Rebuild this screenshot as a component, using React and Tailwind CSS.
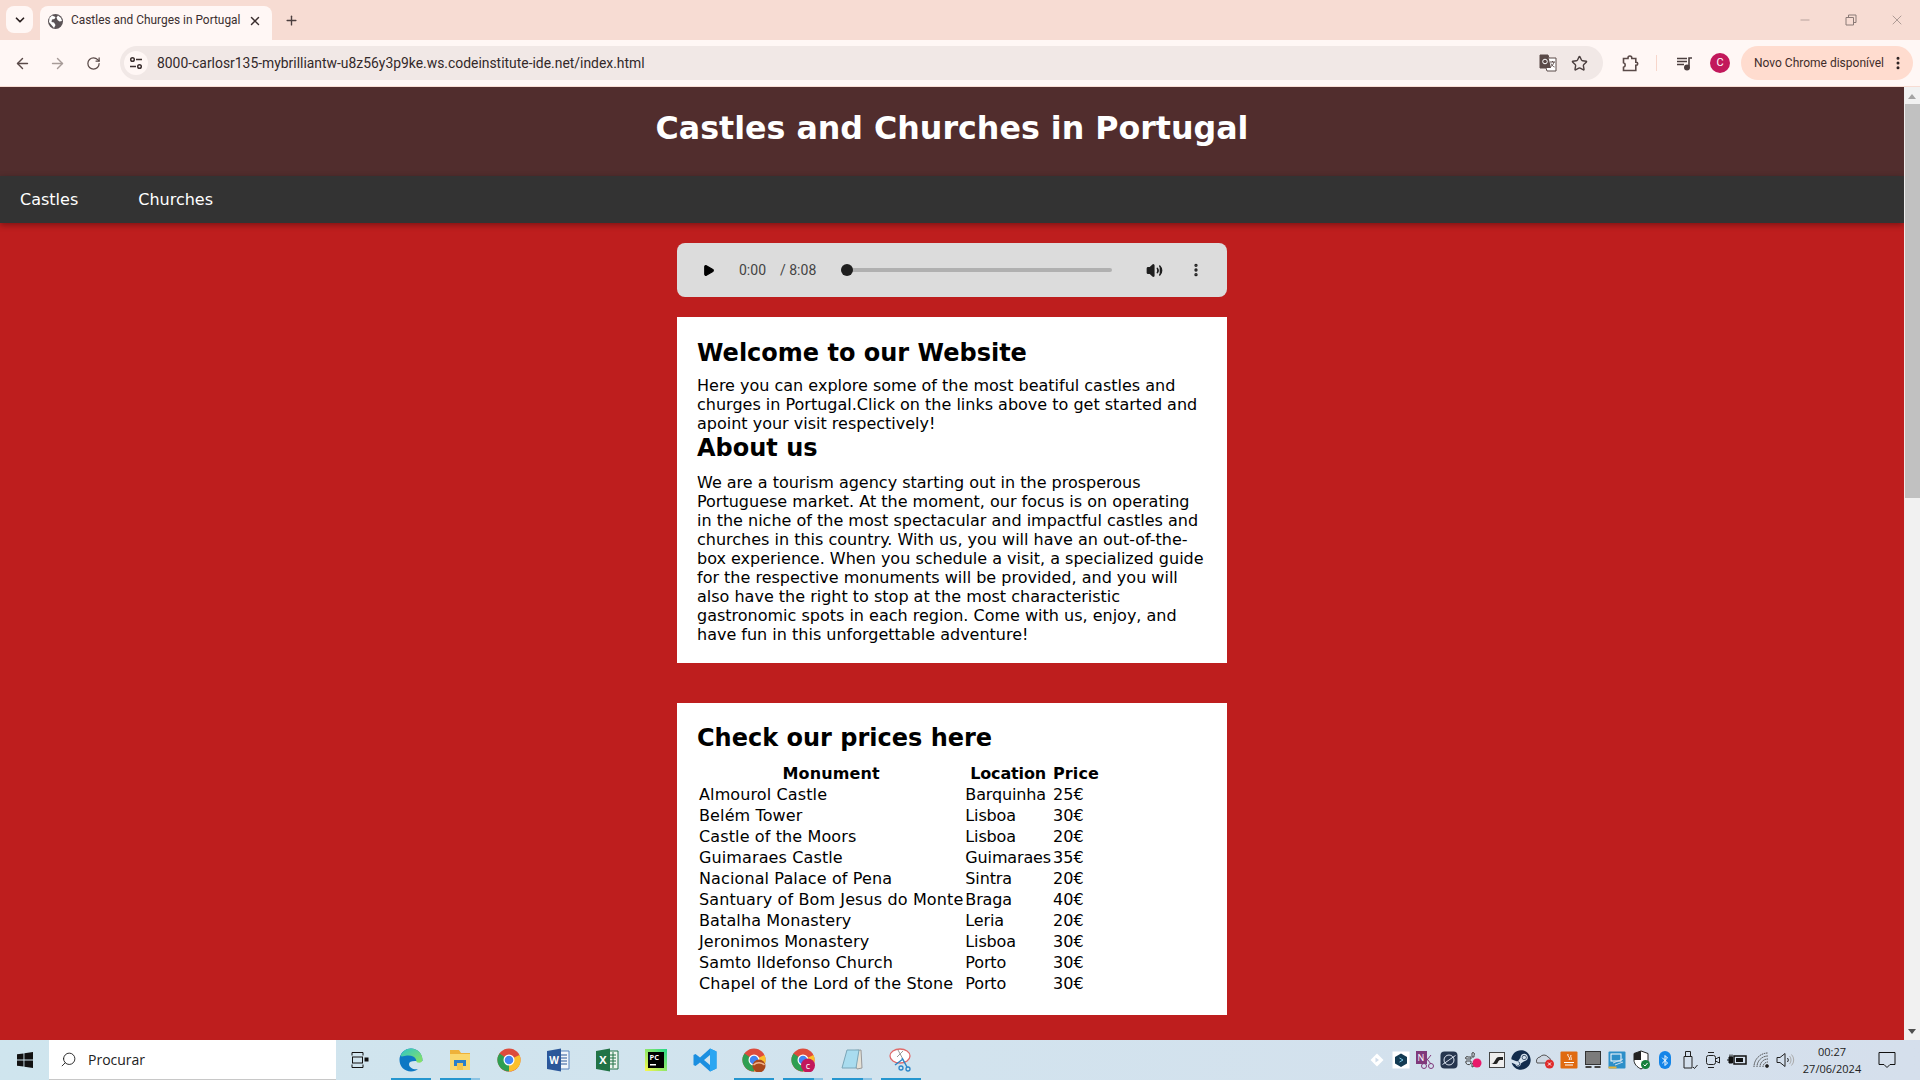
import React from "react";
import { ChevronDown, X, Plus, ArrowLeft, ArrowRight, RotateCw, Star, EllipsisVertical, Minus, Search, Play, Volume2, Bluetooth } from "lucide-react";
import { FaSteam } from "react-icons/fa";

const rows = [
  ["Almourol Castle", "Barquinha", "25€"],
  ["Belém Tower", "Lisboa", "30€"],
  ["Castle of the Moors", "Lisboa", "20€"],
  ["Guimaraes Castle", "Guimaraes", "35€"],
  ["Nacional Palace of Pena", "Sintra", "20€"],
  ["Santuary of Bom Jesus do Monte", "Braga", "40€"],
  ["Batalha Monastery", "Leria", "20€"],
  ["Jeronimos Monastery", "Lisboa", "30€"],
  ["Samto Ildefonso Church", "Porto", "30€"],
  ["Chapel of the Lord of the Stone", "Porto", "30€"],
];

function ChromeBar() {
  return (
    <div className="shrink-0 font-['Roboto',sans-serif]">
      <div className="h-10 bg-[#f7dcd3] flex items-end pl-[6px]">
        <div className="w-[27px] h-[27px] mb-[7px] rounded-lg bg-[#fff7f5] flex items-center justify-center">
          <ChevronDown size={14} strokeWidth={3} color="#2b2020" />
        </div>
        <div className="ml-[7px] w-[232px] h-[34px] bg-[#fff7f5] rounded-t-lg flex items-center pl-[8px] pr-[10px] pb-[4px] text-[11.9px] text-[#3b2f2f]">
          <svg width="15" height="15" viewBox="0 0 15 15">
            <circle cx="7.500" cy="7.500" r="7.500" fill="#5b5356" />
            <path d="M4 1.500 7.500 3 6.500 5 4 5.500 3.500 8 6 8.500 7.500 11 6 14 3.500 11 1 8 1.500 4zM10 1.500 13 4 14 7 11.500 7.500 9.500 6 8.500 3.500z" fill="#fff" />
          </svg>
          <span className="ml-[8px] flex-1 whitespace-nowrap">Castles and Churges in Portugal</span>
          <X size={14} strokeWidth={2.5} color="#3b2f2f" />
        </div>
        <div className="ml-[12px] mb-[12px]">
          <Plus size={15} strokeWidth={2.2} color="#4b3f3f" />
        </div>
        <div className="ml-auto self-center flex items-center pr-[15px] gap-[33px] text-[#8a7a76]">
          <Minus size={14} strokeWidth={1} />
          <svg width="12" height="12" viewBox="0 0 12 12" fill="none" stroke="currentColor"><path d="M1 3.500h7.500V11H1zM3.500 3.500V1H11v7.500H8.500" /></svg>
          <X size={16} strokeWidth={1} className="-ml-px" />
        </div>
      </div>
      <div className="h-[47px] bg-[#fff7f5] border-b border-[#f7dcd3] flex items-center pl-[14px] pr-[6px]">
        <ArrowLeft size={17} strokeWidth={2} color="#5a4a48" />
        <ArrowRight size={17} strokeWidth={2} color="#a79b98" className="ml-[18px]" />
        <RotateCw size={15} strokeWidth={2} color="#5a4a48" className="ml-[20px]" />
        <div className="ml-[19px] w-[1483px] h-[34px] rounded-full bg-[#f1e8e6] flex items-center pl-[4px] pr-[15px]">
          <div className="w-[24px] h-[24px] rounded-full bg-[#fff7f5] flex items-center justify-center">
            <svg width="14" height="14" viewBox="0 0 14 14" fill="none" stroke="#3b2f2f" strokeWidth="1.500"><circle cx="3.500" cy="3.500" r="1.800" /><path d="M7 3.500h6M1 10.500h6" /><circle cx="10.500" cy="10.500" r="1.800" /></svg>
          </div>
          <span className="ml-[9px] flex-1 text-[13.9px] text-[#33282a] whitespace-nowrap">8000-carlosr135-mybrilliantw-u8z56y3p9ke.ws.codeinstitute-ide.net/index.html</span>
          <svg width="18" height="18" viewBox="0 0 18 18">
            <path d="M1 1h8l1 3h7v13H8l-1-3H1z" fill="#fff" stroke="#5a4a48" />
            <path d="M1 1h8l3 13H1z" fill="#5a4a48" />
            <path d="M11 8h5M13.500 7v1M15 8c-.5 2-2 4-3.500 5M12 9.500c.6 1.400 2 3 3.500 3.500" stroke="#5a4a48" fill="none" />
            <circle cx="6" cy="7.500" r="2.300" fill="none" stroke="#fff" />
          </svg>
          <Star size={17} strokeWidth={2} color="#4b3f3f" className="ml-[14px]" />
        </div>
        <svg width="17" height="17" viewBox="0 0 17 17" fill="none" stroke="#5a4a48" strokeWidth="1.600" className="ml-[19px]"><path d="M1.500 3.500h4.500v-.6a1.900 1.900 0 0 1 3.800 0v.6h4v3.800h.4a1.500 1.500 0 0 1 0 3h-.4v5.200H1.500v-3.200a2.400 2.400 0 0 0 0-4.600z" /></svg>
        <div className="ml-[17px] w-px h-[16px] bg-[#f7d6cb]" />
        <svg width="17" height="17" viewBox="0 0 17 17" fill="none" stroke="#4b3f3f" strokeWidth="1.600" className="ml-[19px]"><path d="M1 3.500h10M1 6.500h10M1 9.500h7M13 11.500V3h3" /><circle cx="11" cy="12.500" r="2.200" fill="#4b3f3f" /></svg>
        <div className="ml-[17px] w-5 h-5 rounded-full bg-[#c2185b] text-white text-[11px] flex items-center justify-center">C</div>
        <div className="ml-[11px] w-[172px] h-[34px] rounded-full bg-[#ffdccf] flex items-center pl-[13px] pr-[7px] text-[12px] text-[#3f2c2a] whitespace-nowrap">
          <span className="flex-1">Novo Chrome disponível</span>
          <EllipsisVertical size={16} strokeWidth={2.5} color="#2b2020" />
        </div>
      </div>
    </div>
  );
}

function AudioBar() {
  return (
    <div className="w-[550px] h-[54px] rounded-lg bg-[#dcdcdc] flex items-center text-[14px] text-[#444] font-['Roboto',sans-serif] mx-auto">
      <Play size={13} fill="#000" color="#000" className="ml-[25px]" />
      <span className="ml-[24px]">0:00</span>
      <span className="ml-[14px]">/ 8:08</span>
      <div className="ml-[25px] relative w-[271px] h-[4px] rounded bg-[#b0b0b0]">
        <div className="absolute left-0 -top-[4px] w-3 h-3 rounded-full bg-[#1f1f1f]" />
      </div>
      <Volume2 size={17} fill="#1f1f1f" color="#1f1f1f" strokeWidth={2.200} className="ml-[34px]" />
      <EllipsisVertical size={16} strokeWidth={3} color="#1f1f1f" className="ml-[25px]" />
    </div>
  );
}

function PageBody() {
  return (
    <div className="flex-1 min-w-0 overflow-hidden bg-[#be1e1e] font-['DejaVu_Sans',sans-serif] text-black">
      <header className="h-[89px] bg-[#512d2d] text-center pt-[21px]">
        <h1 className="text-[31.7px] leading-[40px] font-bold text-white">Castles and Churches in Portugal</h1>
      </header>
      <nav className="h-[47px] bg-[#333] text-white flex items-center text-[16px] shadow-[0_2px_6px_rgba(0,0,0,0.35)] relative pt-[1px]">
        <span className="ml-5">Castles</span>
        <span className="ml-[60px]">Churches</span>
      </nav>
      <div className="pt-5">
        <AudioBar />
        <section className="mt-5 mx-auto w-[550px] bg-white px-5 pt-[22px] pb-[19px]">
          <h2 className="text-2xl leading-[28px] font-bold mb-[9px]">Welcome to our Website</h2>
          <p className="text-[16px] leading-[19px]">Here you can explore some of the most beatiful castles and churges in Portugal.Click on the links above to get started and apoint your visit respectively!</p>
          <h2 className="mt-px text-2xl leading-[28px] font-bold mb-[11px]">About us</h2>
          <p className="text-[16px] leading-[19px]">We are a tourism agency starting out in the prosperous Portuguese market. At the moment, our focus is on operating in the niche of the most spectacular and impactful castles and churches in this country. With us, you will have an out-of-the-box experience. When you schedule a visit, a specialized guide for the respective monuments will be provided, and you will also have the right to stop at the most characteristic gastronomic spots in each region. Come with us, enjoy, and have fun in this unforgettable adventure!</p>
        </section>
        <section className="mt-10 mx-auto w-[550px] bg-white px-5 pt-[21px] pb-5">
          <h2 className="text-2xl leading-[28px] font-bold mb-[10px]">Check our prices here</h2>
          <table className="border-separate border-spacing-[2px] text-[16px] leading-[19px] tracking-[0.12px]">
            <thead>
              <tr>
                <th className="font-bold">Monument</th>
                <th className="font-bold tracking-[-0.15px]">Location</th>
                <th className="font-bold">Price</th>
              </tr>
            </thead>
            <tbody>
              {rows.map((r) => (
                <tr key={r[0]}>
                  <td>{r[0]}</td>
                  <td className="tracking-[-0.15px]">{r[1]}</td>
                  <td>{r[2]}</td>
                </tr>
              ))}
            </tbody>
          </table>
        </section>
      </div>
    </div>
  );
}

function Scrollbar() {
  return (
    <div className="w-4 shrink-0 bg-[#f1f1f1] flex flex-col items-center">
      <div className="mt-[7px] w-0 h-0 border-x-[4px] border-x-transparent border-b-[5px] border-b-[#a3a3a3]" />
      <div className="mt-[5px] w-[15px] ml-[1px] h-[394px] bg-[#c1c1c1]" />
      <div className="mt-auto mb-[6px] w-0 h-0 border-x-[4px] border-x-transparent border-t-[5px] border-t-[#505050]" />
    </div>
  );
}

const Icon = ({ children, on, half }) => (
  <div className="w-[49px] h-10 flex items-center justify-center relative">
    {children}
    {on && <div className="absolute bottom-0 left-[5px] w-[40px] h-[2px] bg-[#2596cf]" />}
    {half && <div className="absolute bottom-0 left-[36px] w-[9px] h-[2px] bg-[#8cc4e4]" />}
  </div>
);

const Chrome = ({ badge }) => (
  <svg width="24" height="24" viewBox="0 0 24 24">
    <circle cx="12" cy="12" r="11.500" fill="#dd4c3d" />
    <path d="M12 12 22.500 7A11.500 11.500 0 0 1 12 23.500z" fill="#fbc02d" />
    <path d="M12 12 12 23.500A11.500 11.500 0 0 1 2.500 5.500z" fill="#2e9f52" />
    <circle cx="12" cy="12" r="5.500" fill="#fff" />
    <circle cx="12" cy="12" r="4.300" fill="#4285f4" />
    {badge === "ball" && <circle cx="17" cy="18" r="6.500" fill="#a9481c" />}
    {badge === "ball" && <path d="M11.500 17c3-3 8-3 11 0" stroke="#f2b38a" strokeWidth="1.500" fill="none" />}
    {badge === "c" && <circle cx="17" cy="17.500" r="7" fill="#c2185b" />}
    {badge === "c" && <text x="17" y="20.500" fontSize="9" fill="#fff" textAnchor="middle">c</text>}
  </svg>
);

function Taskbar() {
  return (
    <div className="h-10 shrink-0 flex items-center bg-gradient-to-r from-[#cfe5ee] via-[#d2e3ee] to-[#d5dfec] font-['Open_Sans',sans-serif]">
      <div className="w-[49px] flex justify-center">
        <svg width="16" height="16" viewBox="0 0 16 16" fill="#111"><path d="M0 2.300 6.500 1.400V7.600H0zM7.400 1.300 16 0V7.600H7.400zM0 8.500H6.500V14.600L0 13.700zM7.400 8.500H16V16L7.400 14.700z" /></svg>
      </div>
      <div className="w-[287px] h-10 bg-white border-b border-[#c8c8c8] flex items-center pl-[11px] text-[14px] text-[#222]">
        <Search size={17} strokeWidth={1.300} className="-scale-x-100" />
        <span className="ml-[11px]">Procurar</span>
      </div>
      <div className="w-[50px] flex justify-center pr-[2px]">
        <svg width="18" height="18" viewBox="0 0 18 18" fill="none" stroke="#111"><path d="M1 4.500V1.500h11v3M1 13.500v3h11v-3" /><rect x="1.500" y="6" width="10" height="6" /><rect x="14" y="7" width="3" height="3" fill="#111" /></svg>
      </div>
      <div className="flex">
        <Icon on>
          <svg width="24" height="24" viewBox="0 0 24 24">
            <defs><linearGradient id="edg" x1="0" y1="0" x2="1" y2="1"><stop offset="0" stopColor="#2fc4c9" /><stop offset="1" stopColor="#8be35f" /></linearGradient></defs>
            <path d="M12 .500a11.500 11.500 0 0 0-11.500 11.500c0 6.500 5 11.500 11.500 11.500 3 0 5.500-1 7-2.500-4 1-9-1-9-5 0-2 2-3 6-3h7.500C23.500 5.500 18.500.500 12 .500z" fill="#0e78c4" />
            <path d="M1.500 8C3 3.500 7 .500 12 .500c6.500 0 11.500 5 11.500 11 0 3-2.500 3.500-5 3-1.500-.3-1 -1.500-1.500-3C16 8.500 12 7 8 7.500 5.500 7.800 3 9 1.500 8z" fill="url(#edg)" />
          </svg>
        </Icon>
        <Icon on half>
          <svg width="22" height="20" viewBox="0 0 22 20"><path d="M1 0h9l2 3h9v17H1z" fill="#eeb13a" /><path d="M1 4h20v16H1z" fill="#fad76e" /><path d="M5 10h12v6H14v-3H8v3H5z" fill="#2b7fc9" /><path d="M8 13h6v7H8z" fill="#f5c64e" /></svg>
        </Icon>
        <Icon><Chrome /></Icon>
        <Icon>
          <svg width="24" height="24" viewBox="0 0 24 24"><path d="M9 3h14v18H9z" fill="#f0f4fa" stroke="#5b82bd" /><path d="M15 7h6M15 10h6M15 13h6M15 16h6" stroke="#2b579a" /><path d="M1 3 15 .5v23L1 21z" fill="#2b579a" /><text x="8" y="16" fontSize="10" fontWeight="bold" fill="#fff" textAnchor="middle">W</text></svg>
        </Icon>
        <Icon>
          <svg width="24" height="24" viewBox="0 0 24 24"><path d="M9 3h14v18H9z" fill="#eef6f0" stroke="#217346" /><path d="M15 7h6M15 10h6M15 13h6M15 16h6M18 4v16" stroke="#217346" /><path d="M1 3 15 .5v23L1 21z" fill="#217346" /><text x="8" y="16" fontSize="11" fontWeight="bold" fill="#fff" textAnchor="middle">X</text></svg>
        </Icon>
        <Icon>
          <svg width="22" height="22" viewBox="0 0 22 22"><defs><linearGradient id="pc" x1="0" y1="1" x2="1" y2="0"><stop offset="0" stopColor="#fcf84a" /><stop offset="1" stopColor="#21d789" /></linearGradient></defs><rect width="22" height="22" fill="url(#pc)" /><rect x="3" y="3" width="16" height="16" fill="#000" /><text x="4.500" y="11" fontSize="7.500" fontWeight="bold" fill="#fff">PC</text><rect x="5" y="15" width="6" height="1.500" fill="#fff" /></svg>
        </Icon>
        <Icon>
          <svg width="24" height="24" viewBox="0 0 24 24"><path d="M17 .500 23.500 3.500V20.500L17 23.500 7 14.500 2.500 18 .500 17V7L2.500 6 7 9.500zM17 7 11 12 17 17z" fill="#1b8fe0" /><path d="M17 .500 23.500 3.500V20.500L17 23.500z" fill="#2aa6f2" /></svg>
        </Icon>
        <Icon on><Chrome badge="ball" /></Icon>
        <Icon on half><Chrome badge="c" /></Icon>
        <Icon on half>
          <svg width="24" height="24" viewBox="0 0 24 24"><path d="M8 3 21 2 22 20 17 21z" fill="#e5e1d6" stroke="#999" /><path d="M7 2h12l-3 18H2z" fill="#a9dcef" stroke="#7aa6b8" /></svg>
        </Icon>
        <Icon on>
          <svg width="24" height="24" viewBox="0 0 24 24" fill="none"><ellipse cx="11" cy="8" rx="10" ry="7" fill="#fff" stroke="#e06a6a" strokeWidth="1.300" /><path d="M9 2 16 15M14 3 8 9" stroke="#999" /><path d="M13 10 18 19M14 11 6 17" stroke="#2c86c8" strokeWidth="1.500" /><circle cx="19" cy="21" r="2" stroke="#2c86c8" strokeWidth="1.300" /><circle cx="12" cy="20" r="2" stroke="#2c86c8" strokeWidth="1.300" /></svg>
        </Icon>
      </div>
      <div className="ml-auto flex items-center h-full">
        <div className="flex items-center gap-[4px]">
          <svg width="20" height="20" viewBox="0 0 20 20"><path d="M10 3.500 16.500 10 10 16.500 3.500 10z" fill="#fff" /><path d="M8.500 7.500 12 10 8.500 12.500z" fill="#cfdcea" /></svg>
          <svg width="20" height="20" viewBox="0 0 20 20"><rect x="1.500" y="1.500" width="17" height="17" fill="#fff" /><path d="M10 3.500 16 7v6.500L10 17 4 13.500V7z" fill="#123a52" /><path d="M8.500 8 12 10 8.500 12" stroke="#7fc8e8" fill="none" /></svg>
          <svg width="20" height="20" viewBox="0 0 20 20"><rect x="1" y="1" width="11" height="13" fill="#80397b" /><text x="2.500" y="11" fontSize="9" fill="#fff">N</text><path d="M9 5 16 14M16 5 9 14" stroke="#80397b" fill="none" /><circle cx="9" cy="16" r="2.500" fill="none" stroke="#80397b" /><circle cx="16" cy="16" r="2.500" fill="none" stroke="#80397b" /></svg>
          <svg width="20" height="20" viewBox="0 0 20 20"><rect x="1.500" y="1.500" width="17" height="17" rx="4" fill="#26364f" /><circle cx="10" cy="10" r="5" fill="none" stroke="#dbe4f0" /><path d="M3.500 14.500 16.500 5.500" stroke="#dbe4f0" /></svg>
          <svg width="20" height="20" viewBox="0 0 20 20" fill="none" stroke="#444"><path d="M3 9h5V7H5a1 1 0 0 0-2 2zM9 3v4h2V5a1 1 0 0 0-2-2zM3 11h5v2a2 2 0 1 1-5-2zM9 13v4a2 2 0 0 0 2-2z" /><circle cx="14" cy="13" r="4.500" fill="#e9196a" stroke="none" /></svg>
          <svg width="20" height="20" viewBox="0 0 20 20"><rect x="2.500" y="2.500" width="15" height="15" fill="#eee" stroke="#444" /><path d="M4 14c4 0 4-7 8-7h4v3h-3c-2 0-2 4-4 4z" fill="#222" /></svg>
          <FaSteam size={20} color="#122c4d" />
          <svg width="20" height="20" viewBox="0 0 20 20"><path d="M2 13a4 4 0 0 1 3-6 5 5 0 0 1 8 0 4 4 0 0 1 2 6z" fill="#cfd8e3" stroke="#555" /><circle cx="14.500" cy="14" r="4.500" fill="#e02b2b" /><path d="M13 12.500 16 15.500M16 12.500 13 15.500" stroke="#fff" /></svg>
          <svg width="20" height="20" viewBox="0 0 20 20"><rect x="1.500" y="1.500" width="17" height="17" rx="1" fill="#e06a10" /><path d="M6 15h8M5 12.500h10M9 4c-1 3 3 3 1 6M12 5c-1 2 1 3 0 5" stroke="#fff" fill="none" /></svg>
          <svg width="20" height="20" viewBox="0 0 20 20"><rect x="2.500" y="1.500" width="15" height="13" fill="#7b7b7b" stroke="#333" /><rect x="2.500" y="16" width="6" height="2" fill="#444" /><rect x="11.500" y="16" width="6" height="2" fill="#444" /></svg>
          <svg width="20" height="20" viewBox="0 0 20 20"><rect x="1.500" y="1.500" width="17" height="17" rx="1" fill="#2d8fc9" /><rect x="4" y="4" width="10" height="7" fill="none" stroke="#fff" /><path d="M6 13 16 9M8 15l8-3" stroke="#cde" /><path d="M1.500 17.500h8" stroke="#e2b33c" strokeWidth="2" /></svg>
          <svg width="20" height="20" viewBox="0 0 20 20"><path d="M10 1 17 3.500V10c0 4-3 7-7 9-4-2-7-5-7-9V3.500z" fill="#fff" stroke="#222" /><path d="M10 1V10H3V3.500z" fill="#222" /><circle cx="14.500" cy="14.500" r="4.500" fill="#15803d" /><path d="M12.500 14.500 14 16 16.500 13" stroke="#fff" fill="none" /></svg>
          <div className="w-5 h-5 flex items-center justify-center"><div className="w-[12px] h-[18px] rounded-full bg-[#1384e8] flex items-center justify-center"><Bluetooth size={13} color="#fff" strokeWidth={2} /></div></div>
        </div>
        <div className="ml-[4px] flex items-center gap-[4px]">
          <svg width="20" height="20" viewBox="0 0 20 20" fill="none" stroke="#222"><path d="M6.500 1.500h5v5h-5zM5 6.500h8V18H5zM14 17l1.500 1.500 3-3.500" /></svg>
          <svg width="20" height="20" viewBox="0 0 20 20" fill="none" stroke="#222"><rect x="3.500" y="5.500" width="9" height="9" rx="2" /><path d="M12.500 9 16.500 7V13L12.500 11M5 2.500h6M5 17.500h6" /></svg>
          <svg width="20" height="20" viewBox="0 0 20 20"><path d="M0 10h3M2 7h3.500v6H2zM3 7V4.500M5 7V4.500" stroke="#111" fill="#111" /><rect x="7" y="6" width="12" height="8" fill="none" stroke="#111" strokeWidth="1.500" /><rect x="9" y="8" width="7" height="4" fill="#111" /></svg>
          <svg width="20" height="20" viewBox="0 0 20 20" fill="none" stroke="#444"><path d="M3 17A14 14 0 0 1 17 3M6 17A11 11 0 0 1 17 6M9 17a8 8 0 0 1 8-8M12 17a5 5 0 0 1 5-5" strokeDasharray="1.500 0.700" /><circle cx="16" cy="16" r="1.500" fill="#111" /></svg>
          <svg width="20" height="20" viewBox="0 0 20 20" fill="none" stroke="#222"><path d="M2 7.500h3L10 3.500v13L5 12.500H2z" /><path d="M12.500 8a3 3 0 0 1 0 4" /><path d="M14.500 6a6 6 0 0 1 0 8M16.500 4.500a8 8 0 0 1 0 11" stroke="#aaa" /></svg>
        </div>
        <div className="ml-[2px] w-[70px] text-center text-[11px] leading-[17px] text-[#222]">
          <div>00:27</div>
          <div>27/06/2024</div>
        </div>
        <div className="w-[40px] flex justify-center mr-[13px]">
          <svg width="18" height="18" viewBox="0 0 18 18" fill="none" stroke="#111"><path d="M1 1.500h16v12h-5l-3 3-3-3H1z" /></svg>
        </div>
      </div>
    </div>
  );
}

export default function App() {
  return (
    <div className="h-screen w-full flex flex-col overflow-hidden">
      <ChromeBar />
      <div className="flex-1 min-h-0 flex">
        <PageBody />
        <Scrollbar />
      </div>
      <Taskbar />
    </div>
  );
}
